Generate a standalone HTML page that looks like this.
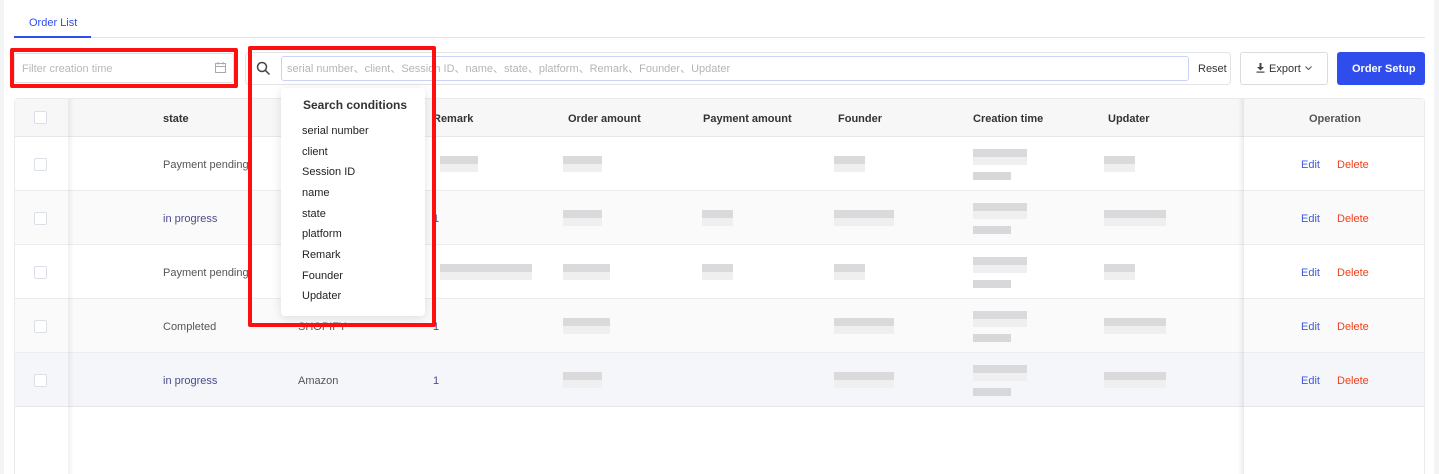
<!DOCTYPE html>
<html><head><meta charset="utf-8"><style>
*{box-sizing:border-box;margin:0;padding:0}
body{width:1439px;height:474px;overflow:hidden;background:#fff;font-family:"Liberation Sans","Noto Sans CJK SC",sans-serif;font-size:11px;color:#333;position:relative}
.a{position:absolute}
.t{position:absolute;white-space:nowrap;line-height:14px}
.h{font-weight:bold;color:#333;font-size:11px}
.cb{position:absolute;left:34px;width:13px;height:13px;border:1px solid #dcdfe6;border-radius:2px;background:#fff}
.bl{position:absolute;height:16px;background:linear-gradient(#dadadc 0 50%,#efeff0 50% 100%)}
.bl2{position:absolute;height:8px;background:#d8d8da}
.e{color:#3b5bdb;position:absolute;left:1301px}
.d{color:#f0401c;position:absolute;left:1337px}
.pop div{position:absolute;left:21px;font-size:11px;color:#222}
.red{position:absolute;border:4px solid #ff1010;border-radius:2px}
</style></head><body>
<div class="a" style="left:0;top:0;width:4px;height:474px;background:#f3f4f6"></div>
<div class="a" style="left:1434px;top:0;width:5px;height:474px;background:#f3f4f6"></div>
<div class="t" style="left:29px;top:16px;color:#2f4ded;font-size:11px">Order List</div>
<div class="a" style="left:14px;top:37px;width:1411px;height:1px;background:#e4e4e4"></div>
<div class="a" style="left:14px;top:36px;width:77px;height:2px;background:#2f4ded"></div>

<div class="a" style="left:14px;top:53px;width:220px;height:30px;border:1px solid #e0e0e0;border-radius:3px"></div>
<div class="t" style="left:22px;top:62px;color:#b8b8b8">Filter creation time</div>
<svg class="a" style="left:214px;top:61px" width="13" height="13" viewBox="0 0 13 13" fill="none" stroke="#aaa" stroke-width="1"><rect x="1.5" y="2.5" width="10" height="9"/><line x1="1.5" y1="5.5" x2="11.5" y2="5.5"/><line x1="4" y1="1" x2="4" y2="3.5"/><line x1="9" y1="1" x2="9" y2="3.5"/></svg>

<div class="a" style="left:245px;top:52px;width:986px;height:33px;border:1px solid #e4e4e4;border-radius:4px"></div>
<svg class="a" style="left:256px;top:61px" width="15" height="15" viewBox="0 0 15 15" fill="none" stroke="#444" stroke-width="1.5"><circle cx="6" cy="6" r="4.5"/><line x1="9.3" y1="9.3" x2="13.5" y2="13.5"/></svg>
<div class="a" style="left:281px;top:56px;width:908px;height:25px;border:1px solid #c9d3f7;border-radius:3px"></div>
<div class="t" style="left:287px;top:62px;color:#b5b5b5">serial number、client、Session ID、name、state、platform、Remark、Founder、Updater</div>
<div class="t" style="left:1198px;top:62px;color:#333">Reset</div>

<div class="a" style="left:1240px;top:52px;width:88px;height:33px;border:1px solid #dcdcdc;border-radius:3px"></div>
<svg class="a" style="left:1256px;top:63px" width="9" height="10" viewBox="0 0 9 10" fill="#444"><rect x="3.5" y="0" width="2" height="4"/><polygon points="1,4 8,4 4.5,7.5"/><rect x="0.5" y="8.5" width="8" height="1.2"/></svg>
<div class="t" style="left:1269px;top:62px;color:#333">Export</div>
<svg class="a" style="left:1305px;top:66px" width="7" height="5" viewBox="0 0 7 5" fill="none" stroke="#555" stroke-width="1"><polyline points="0.5,0.5 3.5,3.5 6.5,0.5"/></svg>
<div class="a" style="left:1337px;top:52px;width:88px;height:33px;background:#2f4ded;border-radius:3px"></div>
<div class="t" style="left:1352px;top:62px;color:#fff;font-weight:bold">Order Setup</div>

<!-- table -->
<div class="a" style="left:14px;top:98px;width:1411px;height:376px;border:1px solid #ebebeb;border-bottom:none;border-radius:4px 4px 0 0"></div>
<div class="a" style="left:15px;top:99px;width:1409px;height:38px;background:#f7f7f7;border-bottom:1px solid #e8e8e8"></div>
<div class="a" style="left:15px;top:190px;width:1409px;height:54px;background:#fafafa"></div>
<div class="a" style="left:15px;top:298px;width:1409px;height:54px;background:#fafafa"></div>
<div class="a" style="left:15px;top:352px;width:1409px;height:54px;background:#f4f6f9"></div>
<div class="a" style="left:15px;top:190px;width:1409px;height:1px;background:#ececec"></div>
<div class="a" style="left:15px;top:244px;width:1409px;height:1px;background:#ececec"></div>
<div class="a" style="left:15px;top:298px;width:1409px;height:1px;background:#ececec"></div>
<div class="a" style="left:15px;top:352px;width:1409px;height:1px;background:#ececec"></div>
<div class="a" style="left:15px;top:406px;width:1409px;height:1px;background:#e6e6e6"></div>
<div class="a" style="left:68px;top:99px;width:6px;height:375px;background:linear-gradient(90deg,rgba(0,0,0,.06),rgba(0,0,0,0))"></div>
<div class="a" style="left:1238px;top:99px;width:6px;height:375px;background:linear-gradient(270deg,rgba(0,0,0,.07),rgba(0,0,0,0))"></div>

<div class="cb" style="top:111px"></div>
<div class="cb" style="top:158px"></div><div class="cb" style="top:212px"></div><div class="cb" style="top:266px"></div><div class="cb" style="top:320px"></div><div class="cb" style="top:374px"></div>

<div class="t h" style="left:163px;top:112px">state</div>
<div class="t h" style="left:433px;top:112px">Remark</div>
<div class="t h" style="left:568px;top:112px">Order amount</div>
<div class="t h" style="left:703px;top:112px">Payment amount</div>
<div class="t h" style="left:838px;top:112px">Founder</div>
<div class="t h" style="left:973px;top:112px">Creation time</div>
<div class="t h" style="left:1108px;top:112px">Updater</div>
<div class="t h" style="left:1309px;top:112px;color:#555">Operation</div>

<div class="t" style="left:163px;top:158px;color:#555">Payment pending</div>
<div class="t" style="left:163px;top:212px;color:#4a4a90">in progress</div>
<div class="t" style="left:163px;top:266px;color:#555">Payment pending</div>
<div class="t" style="left:163px;top:320px;color:#555">Completed</div>
<div class="t" style="left:163px;top:374px;color:#4a4a90">in progress</div>
<div class="t" style="left:298px;top:320px;color:#555">SHOPIFY</div>
<div class="t" style="left:298px;top:374px;color:#555">Amazon</div>
<div class="t" style="left:433px;top:212px;color:#4a4a90">1</div>
<div class="t" style="left:433px;top:320px;color:#4a4a90">1</div>
<div class="t" style="left:433px;top:374px;color:#4a4a90">1</div>

<div class="bl" style="left:440px;top:156px;width:38px"></div>
<div class="bl" style="left:440px;top:264px;width:92px"></div>
<div class="bl" style="left:563px;top:156px;width:39px"></div>
<div class="bl" style="left:563px;top:210px;width:39px"></div>
<div class="bl" style="left:563px;top:264px;width:47px"></div>
<div class="bl" style="left:563px;top:318px;width:47px"></div>
<div class="bl" style="left:563px;top:372px;width:39px"></div>
<div class="bl" style="left:702px;top:210px;width:31px"></div>
<div class="bl" style="left:702px;top:264px;width:31px"></div>
<div class="bl" style="left:834px;top:156px;width:31px"></div>
<div class="bl" style="left:834px;top:210px;width:60px"></div>
<div class="bl" style="left:834px;top:264px;width:31px"></div>
<div class="bl" style="left:834px;top:318px;width:60px"></div>
<div class="bl" style="left:834px;top:372px;width:60px"></div>
<div class="bl" style="left:973px;top:149px;width:54px"></div><div class="bl2" style="left:973px;top:172px;width:38px"></div>
<div class="bl" style="left:973px;top:203px;width:54px"></div><div class="bl2" style="left:973px;top:226px;width:38px"></div>
<div class="bl" style="left:973px;top:257px;width:54px"></div><div class="bl2" style="left:973px;top:280px;width:38px"></div>
<div class="bl" style="left:973px;top:311px;width:54px"></div><div class="bl2" style="left:973px;top:334px;width:38px"></div>
<div class="bl" style="left:973px;top:365px;width:54px"></div><div class="bl2" style="left:973px;top:388px;width:38px"></div>
<div class="bl" style="left:1104px;top:156px;width:31px"></div>
<div class="bl" style="left:1104px;top:210px;width:62px"></div>
<div class="bl" style="left:1104px;top:264px;width:31px"></div>
<div class="bl" style="left:1104px;top:318px;width:62px"></div>
<div class="bl" style="left:1104px;top:372px;width:62px"></div>

<div class="t e" style="top:158px">Edit</div><div class="t d" style="top:158px">Delete</div>
<div class="t e" style="top:212px">Edit</div><div class="t d" style="top:212px">Delete</div>
<div class="t e" style="top:266px">Edit</div><div class="t d" style="top:266px">Delete</div>
<div class="t e" style="top:320px">Edit</div><div class="t d" style="top:320px">Delete</div>
<div class="t e" style="top:374px">Edit</div><div class="t d" style="top:374px">Delete</div>

<div class="a pop" style="left:281px;top:88px;width:144px;height:228px;background:#fff;border-radius:4px;box-shadow:0 2px 10px rgba(0,0,0,.12)">
<div style="left:22px;top:10px;font-size:12px;font-weight:bold;color:#333">Search conditions</div>
<div style="top:37px">serial number</div>
<div style="top:58px">client</div>
<div style="top:78px">Session ID</div>
<div style="top:99px">name</div>
<div style="top:120px">state</div>
<div style="top:140px">platform</div>
<div style="top:161px">Remark</div>
<div style="top:182px">Founder</div>
<div style="top:202px">Updater</div>
</div>

<div class="red" style="left:10px;top:48px;width:228px;height:40px"></div>
<div class="red" style="left:248px;top:46px;width:188px;height:281px"></div>
</body></html>
